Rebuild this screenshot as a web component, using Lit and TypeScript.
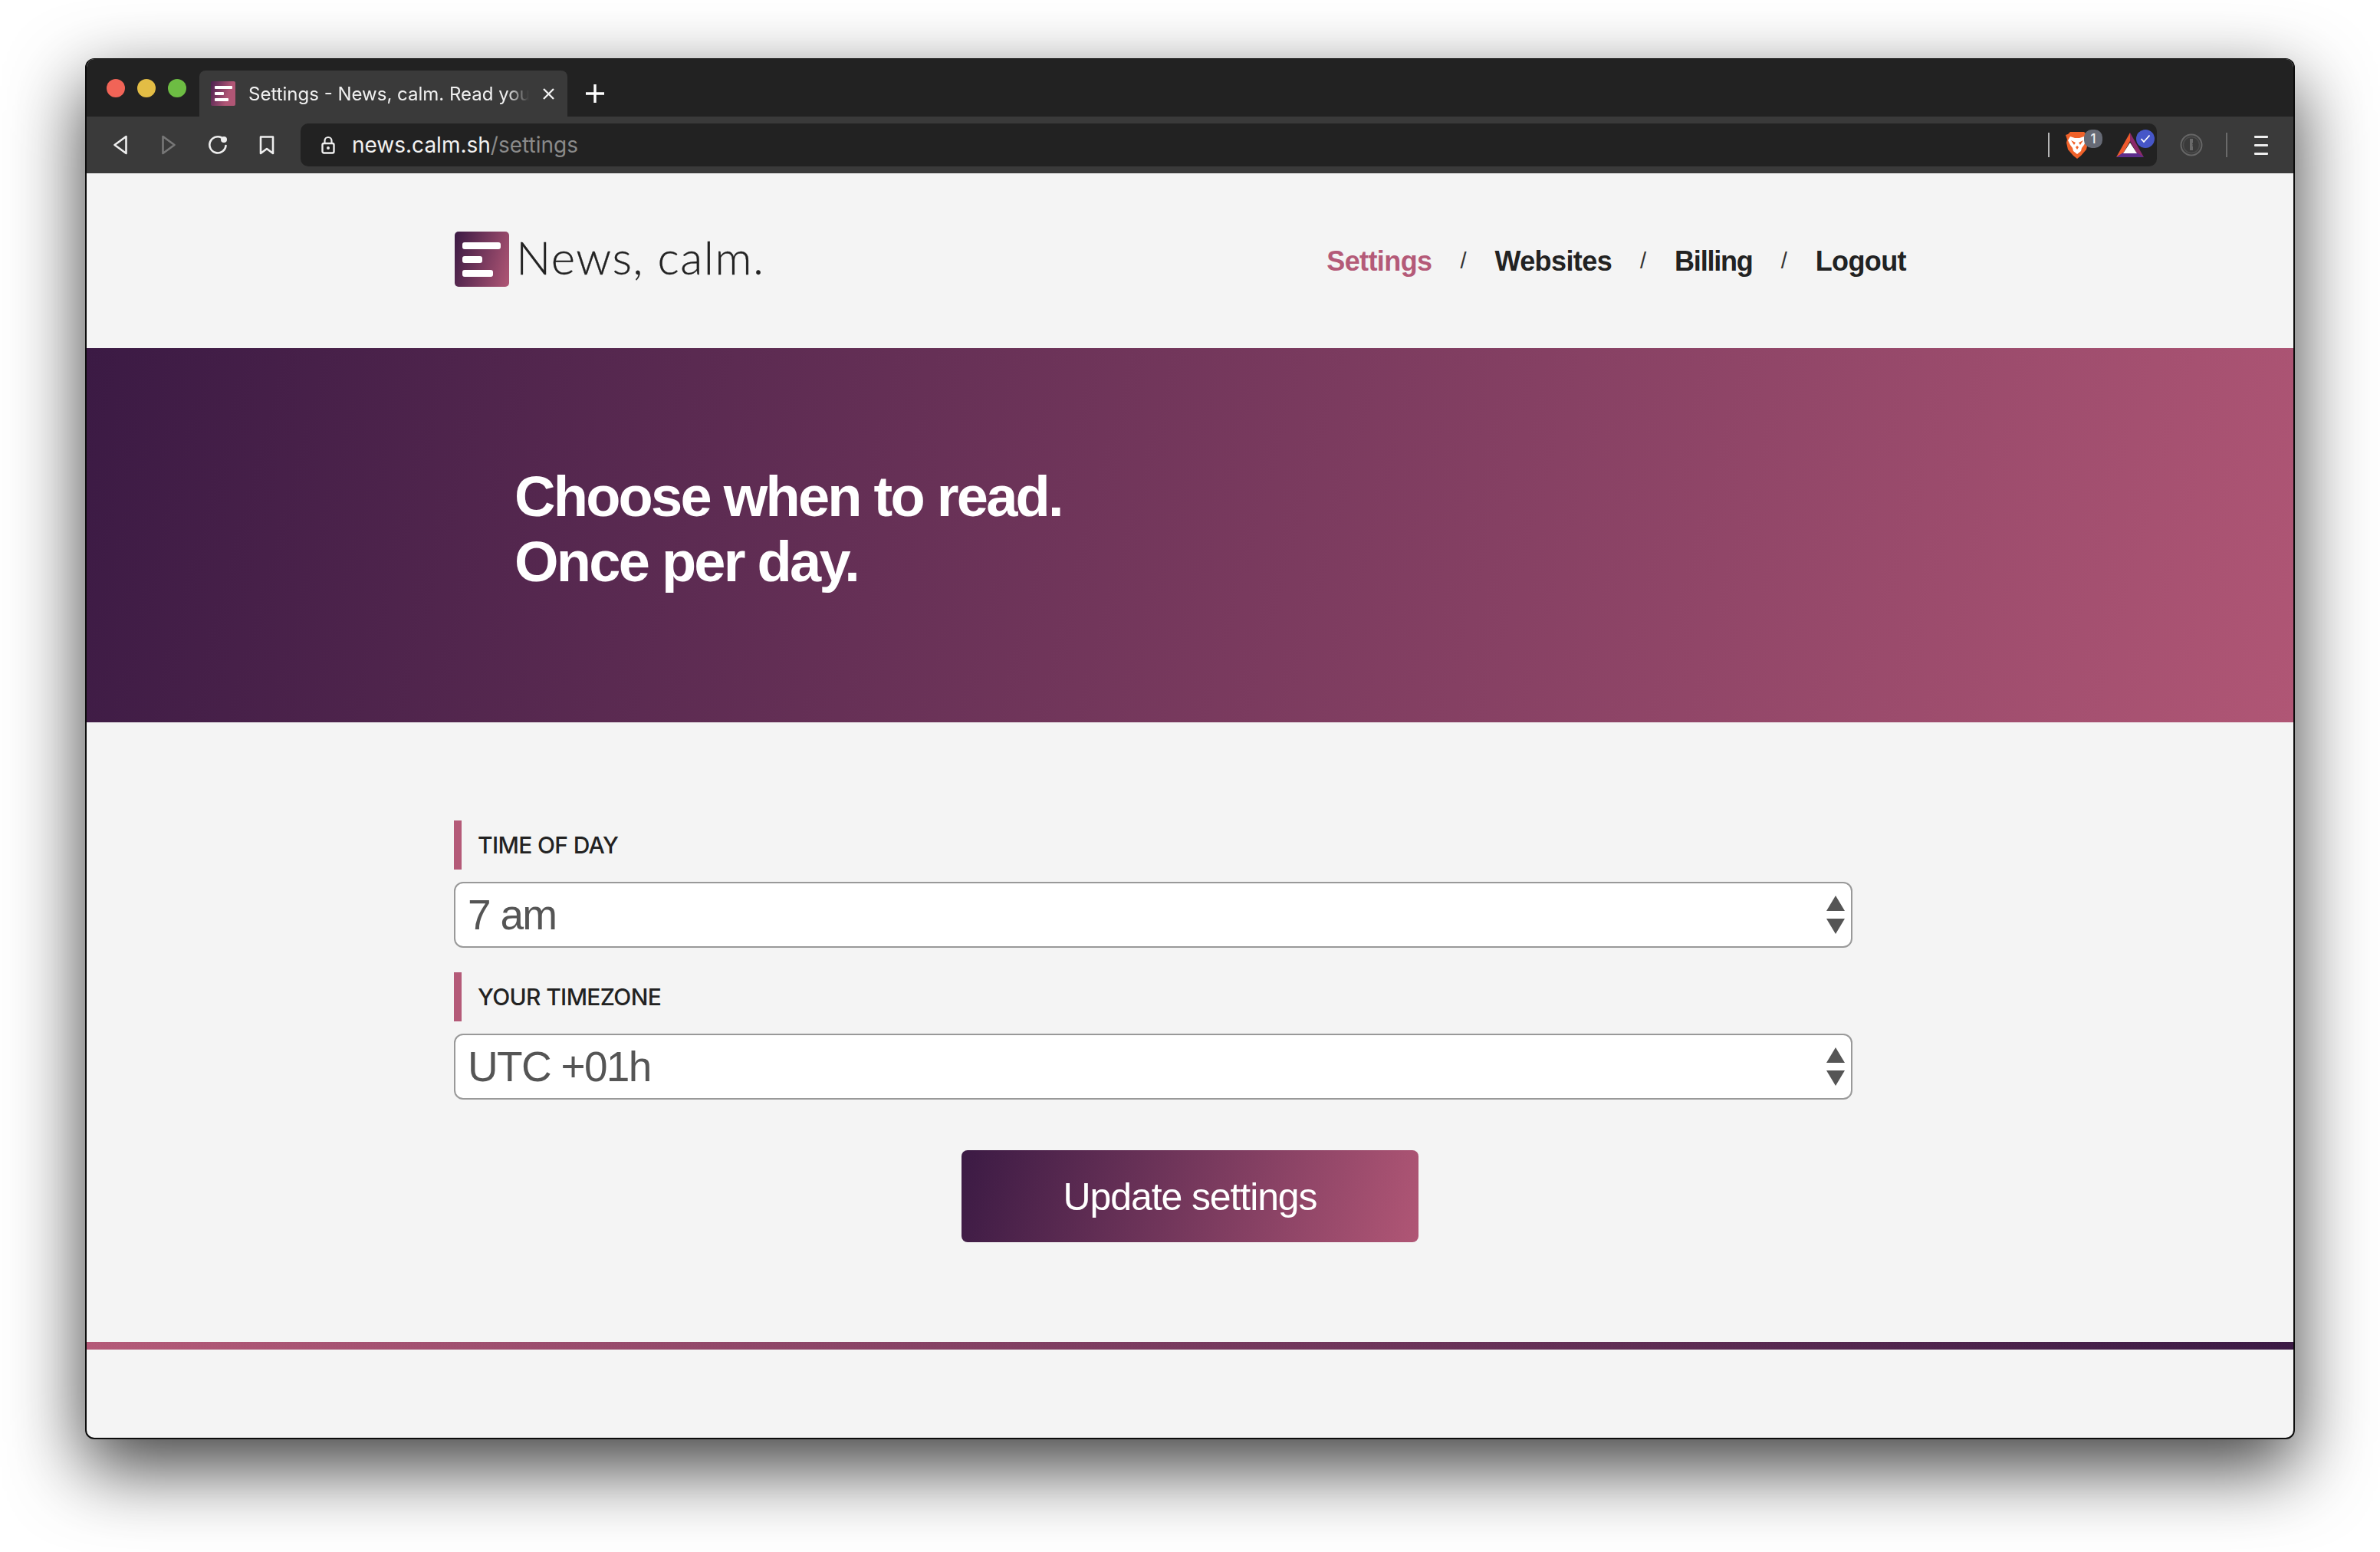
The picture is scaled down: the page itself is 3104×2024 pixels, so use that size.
import { LitElement, html, css, svg } from "lit";
import { customElement } from "lit/decorators.js";

const GRAD = "linear-gradient(105deg,#3b1a44 0%,#b05675 100%)";

@customElement("app-root")
export class AppRoot extends LitElement {
  static styles = css`
    :host { display: block; width: 3104px; height: 2024px; background: #fff; overflow: hidden; font-family: "Liberation Sans", Arial, sans-serif; }
    * { box-sizing: border-box; }
    .page { padding: 76px 0 0 111px; }
    .win { width: 2882px; height: 1801px; border: 2px solid #0c0c0c; border-top-width: 1px; border-radius: 12px; background: #f4f4f4; overflow: hidden; display: flex; flex-direction: column; box-shadow: 0 36px 96px 2px rgba(0,0,0,.74); }

    .titlebar { height: 75px; flex: none; background: #222; display: flex; align-items: flex-end; padding-left: 26px; }
    .lights { display: flex; gap: 16px; align-self: flex-start; margin-top: 26px; }
    .light { width: 24px; height: 24px; border-radius: 50%; }
    .red { background: #f16457; } .yellow { background: #e3bd45; } .green { background: #6dbd43; }
    .tab { margin-left: 17px; width: 480px; height: 60px; background: #3a3a3a; border-radius: 8px 8px 0 0; display: flex; align-items: center; padding-left: 15px; color: #f0f0f0; position: relative; }
    .fav { margin-right: 17px; flex: none; display: block; }
    .tabtext { font: 24px "Inter", "Liberation Sans", sans-serif; width: 366px; flex: none; white-space: nowrap; -webkit-mask-image: linear-gradient(90deg,#000 92%,transparent 100%); mask-image: linear-gradient(90deg,#000 92%,transparent 100%); }
    .tabclose { margin-left: 17px; flex: none; display: block; }
    .plus { margin: 0 0 18px 24px; flex: none; display: block; }

    .toolbar { height: 74px; flex: none; background: #3a3a3a; display: flex; align-items: center; position: relative; }
    .nav-icon { flex: none; display: block; }
    .tools { display: flex; align-items: center; padding-left: 34px; width: 279px; gap: 40px; }
    .fwd { margin-left: 3px; }
    .addr { width: 2421px; height: 56px; background: #222; border-radius: 10px; display: flex; align-items: center; padding-left: 27px; position: relative; flex: none; }
    .url { font: 28px "Inter", "Liberation Sans", sans-serif; color: #f2f2f2; margin-left: 22px; white-space: nowrap; }
    .url span { color: #8a8a8a; }
    .addr-right { margin-left: auto; display: flex; align-items: center; padding-right: 3px; }
    .vsep { width: 2px; height: 32px; background: #b5b5b5; flex: none; }
    .ext { position: relative; display: block; flex: none; height: 40px; }
    .ext svg.mark { position: absolute; left: 0; }
    .brave { width: 48px; margin-left: 21px; }
    .brave svg.mark { top: 2px; }
    .bat { width: 50px; margin-left: 18px; }
    .bat svg.mark { top: 4px; }
    .badge { position: absolute; width: 24px; height: 24px; border-radius: 10px; top: 0; color: #eee; font: 500 17px "Inter", sans-serif; display: flex; align-items: center; justify-content: center; }
    .badge.count { left: 24px; background: #666a75; }
    .badge.check { left: 26px; background: #4656c8; border-radius: 50%; }
    .tb-right { display: flex; align-items: center; flex: 1; padding-left: 30px; }
    .sep2 { background: #6a6a6a; margin-left: 30px; }
    .menu { margin-left: 35px; display: flex; flex-direction: column; gap: 8px; }
    .menu i { display: block; width: 18px; height: 3px; background: #eee; border-radius: 1px; }

    .head { height: 228px; flex: none; display: flex; align-items: center; justify-content: space-between; padding: 0 505px 0 480px; }
    .brand { display: flex; align-items: center; gap: 9px; margin-top: -4px; }
    .logo { width: 71px; height: 72px; border-radius: 5px; flex: none; display: flex; flex-direction: column; gap: 9px; padding: 14px 0 0 10px; background: ${css([GRAD] as any)}; }
    .logo i { display: block; height: 9px; background: #fff; border-radius: 3px; }
    .l1 { width: 50px; } .l2 { width: 26px; } .l3 { width: 40px; }
    .brandname { font: 300 60px "Lato", sans-serif; color: #222; letter-spacing: 1.4px; line-height: 1; margin-top: -6px; -webkit-text-stroke: .3px #222; }
    nav { display: flex; align-items: center; font-size: 36px; font-weight: 700; color: #222; margin-top: 1px; }
    nav a { color: inherit; text-decoration: none; letter-spacing: -.6px; }
    nav a.on { color: #b45a78; }
    nav a.tight { letter-spacing: -1.2px; }
    .slash { font-weight: 400; font-size: 29px; width: 82px; text-align: center; color: #333; }

    .hero { height: 488px; flex: none; background: ${css([GRAD] as any)}; color: #fff; padding: 151px 0 0 558px; }
    .hero h1 { margin: 0; font: 700 74px/85px "Liberation Sans", sans-serif; letter-spacing: -2.75px; }

    form { flex: none; padding: 128px 0 0 479px; display: flex; flex-direction: column; }
    .label { height: 64px; width: 600px; border-left: 10px solid #b45a78; padding-left: 21px; display: flex; align-items: center; font: 500 30px "Inter", "Liberation Sans", sans-serif; letter-spacing: -.65px; color: #222; }
    .selwrap { position: relative; width: 1824px; height: 86px; margin: 16px 0 32px; }
    select { appearance: none; -webkit-appearance: none; display: block; width: 100%; height: 100%; border: 2px solid #999; border-radius: 12px; background: #fff; color: #555; font: 400 55px "Liberation Sans", sans-serif; letter-spacing: -1.7px; padding: 0 0 0 16px; outline: none; }
    .arrows { position: absolute; right: 10px; top: 18px; display: block; pointer-events: none; }
    .btnrow { width: 1824px; display: flex; padding-left: 662px; margin-top: 34px; }
    button { width: 596px; height: 120px; border: 0; border-radius: 8px; color: #fff; font: 400 50px "Liberation Sans", sans-serif; letter-spacing: -1.1px; background: ${css([GRAD] as any)}; padding: 2px 0 0; }

    .rule { height: 10px; flex: none; margin-top: 130px; background: linear-gradient(90deg,#b45a78 0%,#3b1a44 100%); }
  `;

  render() {
    return html`
      <div class="page">
        <div class="win">
          <div class="titlebar">
            <div class="lights"><div class="light red"></div><div class="light yellow"></div><div class="light green"></div></div>
            <div class="tab">
              <svg class="fav" width="32" height="32" viewBox="0 0 32 32">
                <defs><linearGradient id="fg" x1="0" y1="0" x2="1" y2=".3"><stop offset="0" stop-color="#4a2050"/><stop offset=".8" stop-color="#b05675"/></linearGradient></defs>
                <rect width="32" height="32" rx="2" fill="url(#fg)"/>
                <rect x="5" y="6" width="23" height="4" rx="1" fill="#fff"/><rect x="5" y="14" width="12" height="4" rx="1" fill="#fff"/><rect x="5" y="22" width="18" height="4" rx="1" fill="#fff"/>
              </svg>
              <div class="tabtext">Settings - News, calm. Read you</div>
              <svg class="tabclose" width="17" height="17" viewBox="0 0 17 17"><path d="M2 2L15 15M15 2L2 15" stroke="#f0f0f0" stroke-width="2.4"/></svg>
            </div>
            <svg class="plus" width="24" height="24" viewBox="0 0 24 24"><path d="M12 0V24M0 12H24" stroke="#fff" stroke-width="3.4"/></svg>
          </div>
          <div class="toolbar">
            <div class="tools">
              <svg class="nav-icon" width="20" height="26" viewBox="0 0 20 26"><path d="M17.5 2L2.5 13L17.5 24Z" fill="none" stroke="#eee" stroke-width="2.6" stroke-linejoin="round"/></svg>
              <svg class="nav-icon fwd" width="20" height="26" viewBox="0 0 20 26"><path d="M2.5 2L17.5 13L2.5 24Z" fill="none" stroke="#777" stroke-width="2.6" stroke-linejoin="round"/></svg>
              <svg class="nav-icon" width="28" height="26" viewBox="0 0 28 26"><path d="M19 3.5A10.6 10.6 0 1 0 24.5 14" fill="none" stroke="#eee" stroke-width="2.6" stroke-linecap="round"/><circle cx="22" cy="6" r="4" fill="#eee"/></svg>
              <svg class="nav-icon" width="20" height="26" viewBox="0 0 20 26"><path d="M2 2.5H18V24L10 18L2 24Z" fill="none" stroke="#eee" stroke-width="2.6" stroke-linejoin="round"/></svg>
            </div>
            <div class="addr">
              <svg class="nav-icon" width="18" height="24" viewBox="0 0 18 24"><path d="M4.5 10V6.5a4.5 4.5 0 0 1 9 0V10" fill="none" stroke="#eee" stroke-width="2.2"/><rect x="1.5" y="10" width="15" height="12.5" rx="2" fill="none" stroke="#eee" stroke-width="2.4"/><circle cx="9" cy="16" r="2" fill="#eee"/></svg>
              <div class="url">news.calm.sh<span>/settings</span></div>
              <div class="addr-right">
                <div class="vsep"></div>
                <div class="ext brave">
                  <svg class="mark" width="30" height="36" viewBox="0 0 30 36">
                    <path d="M6 1H24L27 4L30 5L28 11L29 15L27 24L20 32L15 36L10 32L3 24L1 15L2 11L0 5L3 4Z" fill="#f0622a"/>
                    <path d="M6 7L12 9H18L24 7L27 12L24 18L21 22L20 26L15 30L10 26L9 22L6 18L3 12Z" fill="#fff"/>
                    <path d="M7 12L13 15L11 18ZM23 12L17 15L19 18ZM13 21L15 19L17 21L15 24Z" fill="#f0622a"/>
                  </svg>
                  <div class="badge count">1</div>
                </div>
                <div class="ext bat">
                  <svg class="mark" width="36" height="32" viewBox="0 0 36 32">
                    <path d="M18 0L0 32L9 27L18 11Z" fill="#ef5a2e"/>
                    <path d="M18 0L36 32L27 27L18 11Z" fill="#8c2a6a"/>
                    <path d="M0 32H36L27 26H9Z" fill="#5d2d8c"/>
                    <path d="M18 13L27 27H9Z" fill="#fff"/>
                  </svg>
                  <div class="badge check">
                    <svg width="14" height="12" viewBox="0 0 14 12"><path d="M1.5 6L5 10L12.5 1.5" fill="none" stroke="#fff" stroke-width="1.8"/></svg>
                  </div>
                </div>
              </div>
            </div>
            <div class="tb-right">
              <svg class="nav-icon" width="30" height="30" viewBox="0 0 30 30"><circle cx="15" cy="15" r="13.5" fill="none" stroke="#666" stroke-width="2"/><circle cx="15" cy="15" r="10.5" fill="none" stroke="#4c4c4c" stroke-width="1.5"/><path d="M13 7h4v5l-1 1.5 1 1.5-1 1 1 1v5h-4z" fill="#6a6a6a"/></svg>
              <div class="vsep sep2"></div>
              <div class="menu"><i></i><i></i><i></i></div>
            </div>
          </div>

          <header class="head">
            <div class="brand">
              <div class="logo"><i class="l1"></i><i class="l2"></i><i class="l3"></i></div>
              <div class="brandname">News, calm.</div>
            </div>
            <nav>
              <a class="on" href="#">Settings</a><span class="slash">/</span>
              <a href="#">Websites</a><span class="slash">/</span>
              <a class="tight" href="#">Billing</a><span class="slash">/</span>
              <a href="#">Logout</a>
            </nav>
          </header>

          <section class="hero"><h1>Choose when to read.<br />Once per day.</h1></section>

          <form @submit=${(e: Event) => e.preventDefault()}>
            ${this.field("TIME OF DAY", "7 am")}
            ${this.field("YOUR TIMEZONE", "UTC +01h")}
            <div class="btnrow"><button type="submit">Update settings</button></div>
          </form>
          <div class="rule"></div>
        </div>
      </div>
    `;
  }

  field(label: string, value: string) {
    return html`
      <div class="label">${label}</div>
      <div class="selwrap">
        <select><option>${value}</option></select>
        <svg class="arrows" width="24" height="50" viewBox="0 0 24 50">${svg`<path d="M12 0L24 20H0ZM0 30H24L12 50Z" fill="#555"/>`}</svg>
      </div>
    `;
  }
}
